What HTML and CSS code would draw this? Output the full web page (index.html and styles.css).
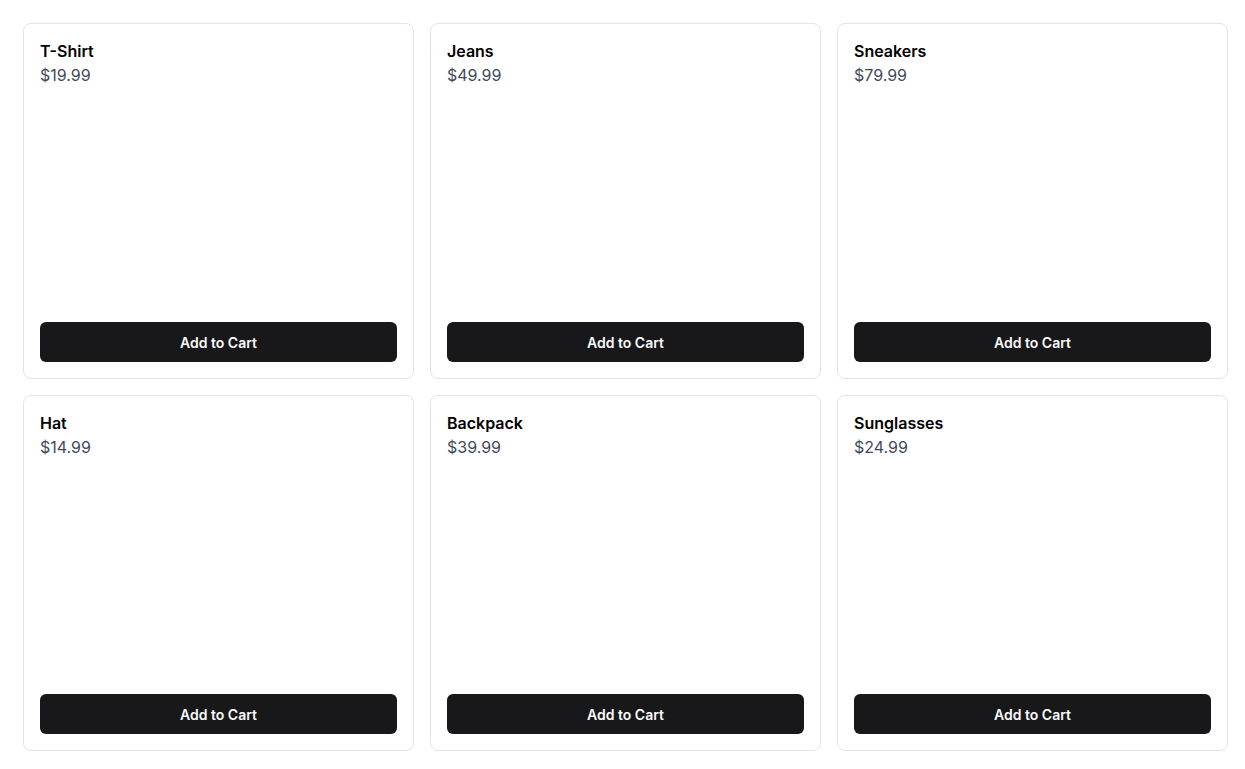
FILE: index.html
```html
<!DOCTYPE html>
<html lang="en">
<head>
<meta charset="utf-8">
<title>Products</title>
<link rel="stylesheet" href="styles.css">
</head>
<body>
<main class="grid">
  <div class="card">
    <div class="info"><h3 class="name">T-Shirt</h3><p class="price">$19.99</p></div>
    <button class="btn">Add to Cart</button>
  </div>
  <div class="card">
    <div class="info"><h3 class="name">Jeans</h3><p class="price">$49.99</p></div>
    <button class="btn">Add to Cart</button>
  </div>
  <div class="card">
    <div class="info"><h3 class="name">Sneakers</h3><p class="price">$79.99</p></div>
    <button class="btn">Add to Cart</button>
  </div>
  <div class="card">
    <div class="info"><h3 class="name">Hat</h3><p class="price">$14.99</p></div>
    <button class="btn">Add to Cart</button>
  </div>
  <div class="card">
    <div class="info"><h3 class="name">Backpack</h3><p class="price">$39.99</p></div>
    <button class="btn">Add to Cart</button>
  </div>
  <div class="card">
    <div class="info"><h3 class="name">Sunglasses</h3><p class="price">$24.99</p></div>
    <button class="btn">Add to Cart</button>
  </div>
</main>
</body>
</html>
```
FILE: styles.css
```css
* { box-sizing: border-box; }
html, body { margin: 0; padding: 0; background: #ffffff; overflow: hidden; }
body {
  font-family: Inter, "Liberation Sans", sans-serif;
  color: #09090b;
}
.grid {
  display: grid;
  grid-template-columns: repeat(3, 391px);
  grid-auto-rows: 356px;
  gap: 16px;
  padding: 23px 0 0 23px;
}
.card {
  display: flex;
  flex-direction: column;
  border: 1px solid #e4e4e7;
  border-radius: 8px;
  padding: 15px 16px 16px;
  background: #fff;
}
.info { display: flex; flex-direction: column; }
.name {
  margin: 0;
  font-size: 16px;
  line-height: 24px;
  font-weight: 600;
  color: #000000;
}
.price {
  margin: 0;
  font-size: 16px;
  line-height: 24px;
  color: #3f4a5c;
}
.btn {
  margin-top: auto;
  height: 40px;
  width: 100%;
  border: none;
  border-radius: 6px;
  background: #18181b;
  color: #fafafa;
  font-family: Inter, "Liberation Sans", sans-serif;
  font-size: 14px;
  font-weight: 600;
  cursor: pointer;
}
```
